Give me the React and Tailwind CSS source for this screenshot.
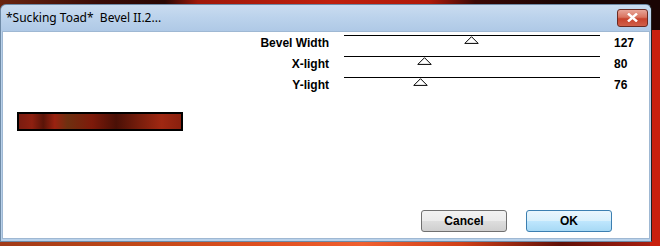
import React from "react";

const sliders = [
  { label: "Bevel Width", value: 127 },
  { label: "X-light", value: 80 },
  { label: "Y-light", value: 76 },
];

const Thumb = () => (
  <svg width="15" height="8" viewBox="0 0 15 8">
    <path d="M7.5 0.7 L14.2 7.4 L0.8 7.4 Z" fill="white" stroke="black" strokeWidth="1" />
  </svg>
);

const SliderRow = ({ label, value }) => (
  <div className="flex h-[21px]">
    <div className="w-[326px] text-right font-bold text-[12px] leading-[14px] pt-[1px]">{label}</div>
    <div className="relative ml-[15px] w-[256px] border-t border-black">
      <div
        className="absolute top-[0px]"
        style={{ left: `${(value / 255) * 256 - 7.5}px` }}
      >
        <Thumb />
      </div>
    </div>
    <div className="ml-[14px] font-bold text-[12px] leading-[14px] pt-[1px]">{value}</div>
  </div>
);

export default function App() {
  return (
    <div
      className="relative w-[660px] h-[246px] overflow-hidden"
      style={{ fontFamily: '"Liberation Sans", Arial, sans-serif' }}
    >
      {/* desktop background */}
      <div className="absolute inset-0 bg-[linear-gradient(90deg,#6a2410_0%,#3a0c06_15%,#2a0804_25%,#a0180a_30%,#c0200c_50%,#b01a0a_65%,#3a0805_72%,#1a0504_85%,#1a0504_100%)]" />
      <div className="absolute left-0 right-0 bottom-0 h-[6px] bg-[linear-gradient(90deg,#a03a18_0%,#c04818_20%,#e05020_40%,#f06030_55%,#d04018_70%,#601008_85%,#b02010_100%)]" />
      <div className="absolute right-0 top-[30px] bottom-0 w-[10px] bg-[#c8200e]" />

      {/* window */}
      <div className="relative mt-[4px] w-[652px] h-[238px] flex flex-col rounded-t-[6px] bg-[#b9d1ea] border border-[#3d5a78]/60 border-r-[#202020]">
        <div className="h-[26px] flex items-center justify-between pl-[5px] pr-[3px] rounded-t-[6px] bg-[linear-gradient(180deg,#cadcf0_0%,#bcd3ec_45%,#afc9e6_100%)]">
          <span
            className="text-[12px] text-black"
            style={{ fontFamily: '"Noto Sans", "Open Sans", sans-serif' }}
          >
            *Sucking Toad*&nbsp; Bevel II.2...
          </span>
          <div className="mb-[1px] w-[31px] h-[18px] rounded-[3px] border border-[#6b2a22] bg-[linear-gradient(180deg,#e8a598_0%,#d9735f_45%,#c7422c_55%,#d0604a_100%)] flex items-center justify-center">
            <svg width="11" height="9" viewBox="0 0 11 9">
              <path d="M1 0.5 L5.5 4.5 L10 0.5 M1 8.5 L5.5 4.5 L10 8.5" stroke="white" strokeWidth="2.4" fill="none" />
            </svg>
          </div>
        </div>
        <div className="flex-1 mx-[1px] mb-[2px] bg-white border border-[#9fb8d3] flex flex-col">
          <div className="pt-[3px]">
            {sliders.map((s) => (
              <SliderRow key={s.label} {...s} />
            ))}
          </div>
          <div className="ml-[14px] mt-[14px] w-[166px] h-[19px] border-2 border-black bg-[linear-gradient(90deg,#7a1c10_0%,#8e2010_8%,#5a1408_15%,#9a2210_22%,#6e3010_30%,#7e1a0a_45%,#4a1006_60%,#7a1e0c_75%,#a02812_88%,#8a200e_100%)]" />
          <div className="flex-1" />
          <div className="flex justify-end gap-[19px] pr-[37px] pb-[6px]">
            <button className="w-[86px] h-[22px] rounded-[3px] border border-[#707070] bg-[linear-gradient(180deg,#f2f2f2_0%,#ebebeb_48%,#dddddd_52%,#cfcfcf_100%)] text-[12px] font-bold leading-none">
              Cancel
            </button>
            <button className="w-[86px] h-[22px] rounded-[3px] border border-[#3c7fb1] bg-[linear-gradient(180deg,#eaf6fd_0%,#d9f0fc_48%,#bee6fd_52%,#a7d9f5_100%)] text-[12px] font-bold leading-none">
              OK
            </button>
          </div>
        </div>
      </div>
    </div>
  );
}
